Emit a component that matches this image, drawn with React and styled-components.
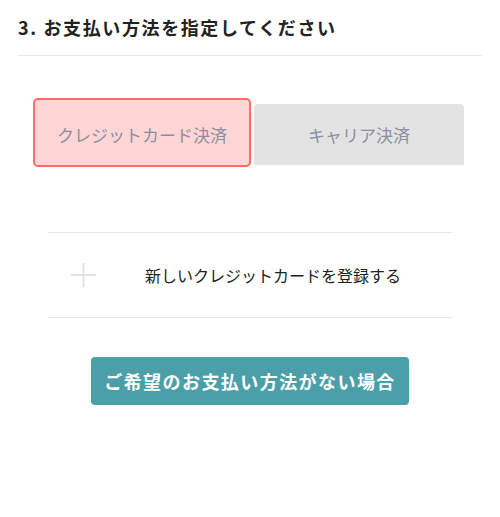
import React from "react";
import styled, { createGlobalStyle } from "styled-components";

const Global = createGlobalStyle`
  html, body { margin: 0; padding: 0; background: #fff; }
  body { font-family: "Noto Sans CJK JP", "Noto Sans", sans-serif; color: #222; }
  * { box-sizing: border-box; }
`;

const Page = styled.div`
  width: 500px;
  padding: 0 18px;
`;

const Title = styled.h2`
  margin: 0;
  padding: 14px 0 15px;
  font-size: 18px;
  line-height: 26px;
  font-weight: 700;
  letter-spacing: 0.09em;
  color: #222;
  border-bottom: 1px solid #e8e8e8;
`;

const Tabs = styled.div`
  display: flex;
  align-items: flex-start;
  margin: 42px 0 0 15px;
  gap: 3px;
`;

const Tab = styled.button`
  display: flex;
  align-items: center;
  justify-content: center;
  font-family: inherit;
  font-size: 17px;
  color: #8b8f9c;
  cursor: pointer;
  padding: 0;
  ${({ $active }) =>
    $active
      ? `
    width: 218px;
    height: 69px;
    background: #ffd5d5;
    border: 2px solid #ff6b6b;
    border-radius: 5px;
    padding-top: 3px;
  `
      : `
    width: 210px;
    height: 61px;
    margin-top: 6px;
    background: #e3e3e3;
    border: none;
    border-radius: 4px 4px 0 0;
  `}
`;

const AddRow = styled.div`
  margin: 65px 30px 0;
  height: 86px;
  border-top: 1px solid #e6e6e6;
  border-bottom: 1px solid #e6e6e6;
  display: flex;
  align-items: center;
  padding-left: 23px;
  gap: 49px;
`;

const Plus = styled.svg`
  width: 25px;
  height: 24px;
  flex: none;
`;

const AddText = styled.span`
  font-size: 16px;
  color: #222;
`;

const ButtonWrap = styled.div`
  display: flex;
  justify-content: center;
  margin-top: 39px;
`;

const HelpButton = styled.button`
  width: 318px;
  height: 48px;
  border: none;
  border-radius: 4px;
  background: #4a9fa9;
  color: #fff;
  font-family: inherit;
  font-size: 18px;
  font-weight: 700;
  letter-spacing: 0.08em;
  cursor: pointer;
  padding: 0;
`;

export default function App() {
  return (
    <>
      <Global />
      <Page>
        <Title>3. お支払い方法を指定してください</Title>
        <Tabs>
          <Tab $active>クレジットカード決済</Tab>
          <Tab>キャリア決済</Tab>
        </Tabs>
        <AddRow>
          <Plus viewBox="0 0 25 24">
            <path d="M12.5 0V24M0 12H25" stroke="#e2e2e2" strokeWidth="2" fill="none" />
          </Plus>
          <AddText>新しいクレジットカードを登録する</AddText>
        </AddRow>
        <ButtonWrap>
          <HelpButton>ご希望のお支払い方法がない場合</HelpButton>
        </ButtonWrap>
      </Page>
    </>
  );
}
